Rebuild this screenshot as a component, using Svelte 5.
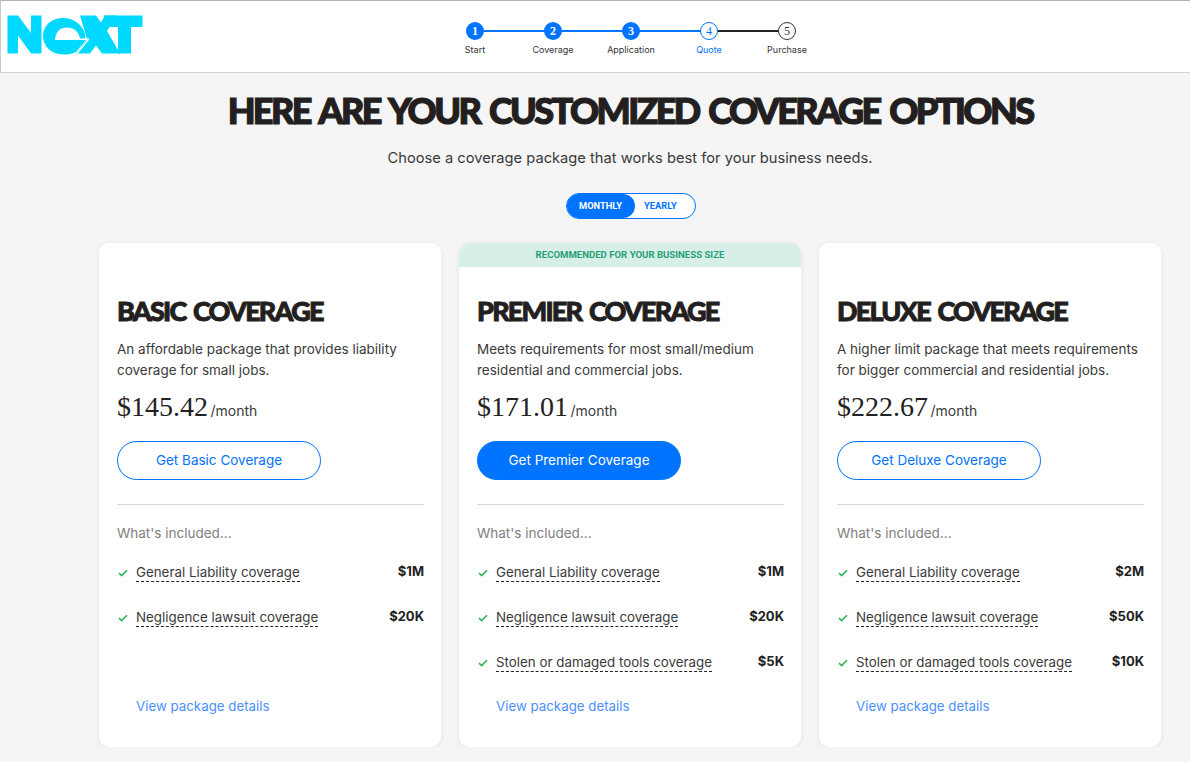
<script lang="ts">
  type Feature = { name: string; value: string };
  type Plan = {
    name: string;
    blurb: string[];
    price: string;
    cta: string;
    primary?: boolean;
    banner?: string;
    features: Feature[];
  };

  const steps = [
    { n: 1, label: 'Start', state: 'done' },
    { n: 2, label: 'Coverage', state: 'done' },
    { n: 3, label: 'Application', state: 'done' },
    { n: 4, label: 'Quote', state: 'current' },
    { n: 5, label: 'Purchase', state: 'todo' },
  ];

  const plans: Plan[] = [
    {
      name: 'Basic Coverage',
      blurb: ['An affordable package that provides liability', 'coverage for small jobs.'],
      price: '$145.42',
      cta: 'Get Basic Coverage',
      features: [
        { name: 'General Liability coverage', value: '$1M' },
        { name: 'Negligence lawsuit coverage', value: '$20K' },
      ],
    },
    {
      name: 'Premier Coverage',
      blurb: ['Meets requirements for most small/medium', 'residential and commercial jobs.'],
      price: '$171.01',
      cta: 'Get Premier Coverage',
      primary: true,
      banner: 'Recommended for your business size',
      features: [
        { name: 'General Liability coverage', value: '$1M' },
        { name: 'Negligence lawsuit coverage', value: '$20K' },
        { name: 'Stolen or damaged tools coverage', value: '$5K' },
      ],
    },
    {
      name: 'Deluxe Coverage',
      blurb: ['A higher limit package that meets requirements', 'for bigger commercial and residential jobs.'],
      price: '$222.67',
      cta: 'Get Deluxe Coverage',
      features: [
        { name: 'General Liability coverage', value: '$2M' },
        { name: 'Negligence lawsuit coverage', value: '$50K' },
        { name: 'Stolen or damaged tools coverage', value: '$10K' },
      ],
    },
  ];
</script>

<header class="topbar">
  <svg class="logo" width="136" height="40" viewBox="0 0 136 40" role="img" aria-label="Next">
    <g fill="#00d9ff">
      <path d="M.5 .5H11L24 18V.5H34.5V38.5H24L11 20.5V38.5H.5z" />
      <path d="M73 .5H89L94 7.5 98 .5H110L100 16 113 38.5H95L89 30.5 83 38.5H69L80 24z" />
      <path d="M97 .5H135.5V12H124V38.5H111V12H97z" />
      <path d="M56 3C66 3 75 9 78 19V26L69 37C65 39 60 39.5 56 39.5 44 39.5 36 31 36 21 36 11 44 3 56 3Z" />
    </g>
    <path fill="white" d="M48 25C48.5 17 53 12.500 60 12.500 67 12.500 72 17 73 23.500H82V25H48Z" />
    <path stroke="white" stroke-width="1.200" fill="none" d="M81.500 24.500 70 38.500" />
  </svg>
  <ol class="stepper">
    {#each steps as step, i}
      <li class="step {step.state}">
        {#if i < steps.length - 1}
          <span class="link {step.state}"></span>
        {/if}
        <span class="dot">{step.n}</span>
        <span class="label">{step.label}</span>
      </li>
    {/each}
  </ol>
</header>

<main class="page">
  <h1>Here are your customized coverage options</h1>
  <p class="lead">Choose a coverage package that works best for your business needs.</p>

  <div class="toggle">
    <span class="opt active">Monthly</span>
    <span class="opt">Yearly</span>
  </div>

  <section class="cards">
    {#each plans as plan}
      <article class="card">
        <div class="banner" class:on={plan.banner}>{plan.banner ?? ''}</div>
        <div class="body">
          <h2>{plan.name}</h2>
          <p class="blurb">{plan.blurb[0]}<br />{plan.blurb[1]}</p>
          <p class="price"><span class="amount">{plan.price}</span> <span class="per">/month</span></p>
          <button class="cta" class:primary={plan.primary}>{plan.cta}</button>
          <hr />
          <p class="included">What's included...</p>
          <ul class="features">
            {#each plan.features as f}
              <li>
                <svg class="check" width="10" height="8" viewBox="0 0 10 8" aria-hidden="true">
                  <path d="M1 4.2 3.6 6.6 9 1.2" fill="none" stroke="#2fb457" stroke-width="1.6" />
                </svg>
                <span class="fname">{f.name}</span>
                <span class="fval">{f.value}</span>
              </li>
            {/each}
          </ul>
          <a class="details" href="#details">View package details</a>
        </div>
      </article>
    {/each}
  </section>
</main>

<style>
  :global(body) {
    background: #f5f5f5;
    font-family: Inter, "Noto Sans", sans-serif;
    color: #3a3a3a;
    overflow: hidden;
  }

  .topbar {
    display: flex;
    height: 71px;
    background: white;
    border-top: 1px solid #b5b5b5;
    border-left: 1px solid #c8c8c8;
    border-bottom: 1px solid #d2d2d2;
  }

  .logo {
    margin: 14px 0 0 6px;
    flex: none;
  }

  .stepper {
    display: flex;
    list-style: none;
    margin: 0 0 0 293px;
    padding: 0;
  }

  .step {
    position: relative;
    width: 78px;
    padding-top: 21px;
    display: flex;
    flex-direction: column;
    align-items: center;
    font-size: 9px;
    color: #333;
  }

  .link {
    position: absolute;
    left: 39px;
    top: 29px;
    width: 78px;
    height: 2px;
    background: #0073ff;
  }

  .link.current { background: #222; }

  .dot {
    position: relative;
    box-sizing: border-box;
    width: 18px;
    height: 18px;
    border-radius: 50%;
    display: flex;
    align-items: center;
    justify-content: center;
    font-family: "Liberation Serif", serif;
    font-weight: 700;
    font-size: 12px;
    background: #0073ff;
    color: white;
  }

  .current .dot {
    background: white;
    border: 1.5px solid #0073ff;
    color: #0073ff;
    font-weight: 400;
  }

  .todo .dot {
    background: white;
    border: 1.5px solid #333;
    color: #333;
    font-weight: 400;
  }

  .label {
    margin-top: 4px;
    line-height: 12px;
  }

  .current .label { color: #0073ff; }

  .page {
    width: 1062px;
    margin-left: 99px;
    display: flex;
    flex-direction: column;
    align-items: center;
  }

  h1 {
    margin: 17px -20px 0;
    font-family: Lato, sans-serif;
    font-weight: 900;
    font-size: 36px;
    line-height: 40px;
    letter-spacing: -2.6px;
    word-spacing: 3.8px;
    color: #231f20;
    text-transform: uppercase;
    white-space: nowrap;
    -webkit-text-stroke: 1.2px #231f20;
  }

  .lead {
    margin: 16px 0 0;
    font-size: 14.7px;
    line-height: 24px;
  }

  .toggle {
    display: flex;
    box-sizing: border-box;
    width: 130px;
    height: 26px;
    margin: 23px 0 0 1px;
    background: white;
    border: 1px solid #0073ff;
    border-radius: 13px;
    overflow: hidden;
    font-family: Roboto, sans-serif;
    font-weight: 700;
    font-size: 9.3px;
    text-transform: uppercase;
    color: #0073ff;
  }

  .opt {
    display: flex;
    align-items: center;
    justify-content: center;
    width: 52px;
    padding-bottom: 2px;
  }

  .opt.active {
    width: 68px;
    background: #0073ff;
    color: white;
    border-radius: 0 13px 13px 0;
  }

  .cards {
    display: grid;
    grid-template-columns: repeat(3, 342px);
    gap: 18px;
    margin-top: 24px;
  }

  .card {
    height: 504px;
    background: white;
    border-radius: 10px;
    overflow: hidden;
    box-shadow: 0 1px 5px rgba(0, 0, 0, 0.08);
  }

  .banner {
    height: 24px;
    line-height: 24px;
    text-align: center;
    font-family: Roboto, sans-serif;
    font-weight: 700;
    font-size: 9.6px;
    text-transform: uppercase;
    color: #27a07a;
  }

  .banner.on { background: #d8efe8; }

  .body {
    padding: 0 17px 0 18px;
  }

  h2 {
    margin: 30px 0 0;
    font-family: Lato, sans-serif;
    font-weight: 900;
    font-size: 27px;
    line-height: 28px;
    letter-spacing: -1.8px;
    word-spacing: 3px;
    color: #231f20;
    text-transform: uppercase;
    -webkit-text-stroke: 0.9px #231f20;
  }

  .blurb {
    margin: 14px 0 0;
    font-size: 13.5px;
    line-height: 21px;
    white-space: nowrap;
  }

  .price {
    margin: 9px 0 0;
    line-height: 34px;
    height: 34px;
  }

  .amount {
    font-family: "Liberation Serif", serif;
    font-size: 28px;
    color: #222;
  }

  .per {
    margin-left: -2px;
    font-size: 14px;
  }

  .cta {
    display: block;
    box-sizing: border-box;
    width: 204px;
    height: 39px;
    margin-top: 17px;
    padding-bottom: 3px;
    background: white;
    border: 1px solid #0073ff;
    border-radius: 20px;
    font-family: inherit;
    font-size: 13.5px;
    color: #0073ff;
  }

  .cta.primary {
    background: #0073ff;
    color: white;
  }

  hr {
    height: 1px;
    margin: 24px 0 0;
    border: 0;
    background: #d8d8d8;
  }

  .included {
    margin: 18px 0 0;
    font-size: 13.5px;
    line-height: 20px;
    color: #808080;
  }

  .features {
    list-style: none;
    height: 135px;
    margin: 7px 0 11px;
    padding: 0;
    font-size: 13.35px;
  }

  .features li {
    display: flex;
    align-items: center;
    height: 45px;
  }

  .check {
    flex: none;
    margin: 0 8px 0 1px;
  }

  .fname {
    line-height: 17px;
    border-bottom: 1px dashed #222;
  }

  .fval {
    margin-left: auto;
    padding-bottom: 3px;
    font-size: 13px;
    font-weight: 700;
    color: #222;
  }

  .details {
    display: block;
    margin: 0 0 0 19px;
    font-size: 13.3px;
    line-height: 20px;
    color: #4d90ff;
    text-decoration: none;
  }
</style>
